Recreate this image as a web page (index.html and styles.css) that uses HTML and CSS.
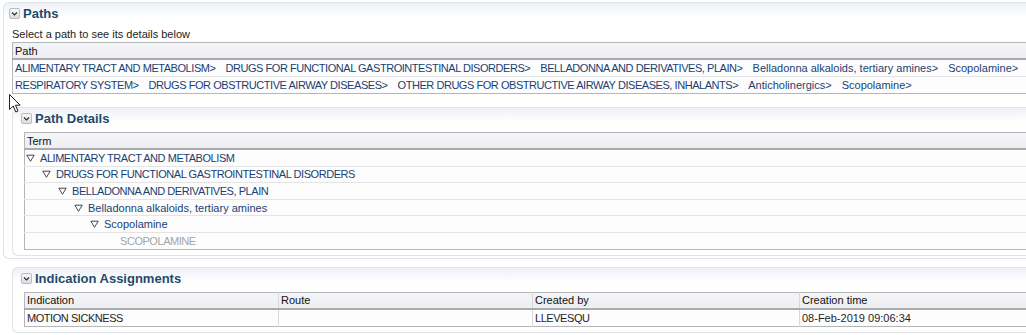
FILE: index.html
```
<!DOCTYPE html>
<html lang="en">
<head>
    <meta charset="UTF-8">
    <title>Paths</title>
<link rel="stylesheet" href="styles.css">
</head>
<body>
    <div class="page">
        <div class="panel panel-outer">
            <div class="panel-head">
                <span class="toggle"><svg width="11" height="11" viewBox="0 0 11 11"><defs><linearGradient id="tg" x1="0" y1="0" x2="0" y2="1"><stop offset="0" stop-color="#fbfbfb"/><stop offset="1" stop-color="#d9dbde"/></linearGradient></defs><rect x="0.5" y="0.5" width="10" height="10" rx="1.5" fill="url(#tg)" stroke="#b9bcc0"/><path d="M3 4.5 L5.5 7 L8 4.5" fill="none" stroke="#2c2c2c" stroke-width="1.1"/></svg></span>
                <span class="panel-title">Paths</span>
            </div>
            <div class="hint">Select a path to see its details below</div>
            <table class="grid grid-paths">
                <thead>
                    <tr><th>Path</th></tr>
                </thead>
                <tbody>
                    <tr><td>
                        <span class="crumb caps">ALIMENTARY TRACT AND METABOLISM&gt;</span><span class="crumb caps">DRUGS FOR FUNCTIONAL GASTROINTESTINAL DISORDERS&gt;</span><span class="crumb caps">BELLADONNA AND DERIVATIVES, PLAIN&gt;</span><span class="crumb">Belladonna alkaloids, tertiary amines&gt;</span><span class="crumb">Scopolamine&gt;</span>
                    </td></tr>
                    <tr><td>
                        <span class="crumb caps">RESPIRATORY SYSTEM&gt;</span><span class="crumb caps">DRUGS FOR OBSTRUCTIVE AIRWAY DISEASES&gt;</span><span class="crumb caps">OTHER DRUGS FOR OBSTRUCTIVE AIRWAY DISEASES, INHALANTS&gt;</span><span class="crumb">Anticholinergics&gt;</span><span class="crumb">Scopolamine&gt;</span>
                    </td></tr>
                </tbody>
            </table>

            <div class="panel panel-inner">
                <div class="panel-head">
                    <span class="toggle"><svg width="11" height="11" viewBox="0 0 11 11"><rect x="0.5" y="0.5" width="10" height="10" rx="1.5" fill="url(#tg)" stroke="#b9bcc0"/><path d="M3 4.5 L5.5 7 L8 4.5" fill="none" stroke="#2c2c2c" stroke-width="1.1"/></svg></span>
                    <span class="panel-title">Path Details</span>
                </div>
                <table class="grid grid-tree">
                    <thead>
                        <tr><th>Term</th></tr>
                    </thead>
                    <tbody>
                        <tr><td><span class="node caps level-0"><svg class="twisty" width="9" height="8" viewBox="0 0 9 8"><path d="M0.8 1.2 H8.2 L4.5 7.3 Z" fill="none" stroke="#333" stroke-width="0.9"/></svg>ALIMENTARY TRACT AND METABOLISM</span></td></tr>
                        <tr><td><span class="node caps level-1"><svg class="twisty" width="9" height="8" viewBox="0 0 9 8"><path d="M0.8 1.2 H8.2 L4.5 7.3 Z" fill="none" stroke="#333" stroke-width="0.9"/></svg>DRUGS FOR FUNCTIONAL GASTROINTESTINAL DISORDERS</span></td></tr>
                        <tr><td><span class="node caps level-2"><svg class="twisty" width="9" height="8" viewBox="0 0 9 8"><path d="M0.8 1.2 H8.2 L4.5 7.3 Z" fill="none" stroke="#333" stroke-width="0.9"/></svg>BELLADONNA AND DERIVATIVES, PLAIN</span></td></tr>
                        <tr><td><span class="node level-3"><svg class="twisty" width="9" height="8" viewBox="0 0 9 8"><path d="M0.8 1.2 H8.2 L4.5 7.3 Z" fill="none" stroke="#333" stroke-width="0.9"/></svg>Belladonna alkaloids, tertiary amines</span></td></tr>
                        <tr><td><span class="node level-4"><svg class="twisty" width="9" height="8" viewBox="0 0 9 8"><path d="M0.8 1.2 H8.2 L4.5 7.3 Z" fill="none" stroke="#333" stroke-width="0.9"/></svg>Scopolamine</span></td></tr>
                        <tr><td><span class="node caps level-5 leaf">SCOPOLAMINE</span></td></tr>
                    </tbody>
                </table>
            </div>
        </div>

        <div class="panel panel-inner panel-solo">
            <div class="panel-head">
                <span class="toggle"><svg width="11" height="11" viewBox="0 0 11 11"><rect x="0.5" y="0.5" width="10" height="10" rx="1.5" fill="url(#tg)" stroke="#b9bcc0"/><path d="M3 4.5 L5.5 7 L8 4.5" fill="none" stroke="#2c2c2c" stroke-width="1.1"/></svg></span>
                <span class="panel-title">Indication Assignments</span>
            </div>
            <table class="grid grid-cols">
                <thead>
                    <tr><th class="col-ind">Indication</th><th class="col-route">Route</th><th class="col-by">Created by</th><th>Creation time</th></tr>
                </thead>
                <tbody>
                    <tr><td class="caps">MOTION SICKNESS</td><td></td><td class="caps">LLEVESQU</td><td>08-Feb-2019 09:06:34</td></tr>
                </tbody>
            </table>
        </div>
    </div>

    <!-- mouse pointer caught in the screenshot -->
    <svg class="pointer" width="12" height="19" viewBox="0 0 12 19"><path d="M0.5 0.5 V15.5 L4.2 12 L6.8 18 L9 17 L6.5 11.2 H11.2 Z" fill="#fff" stroke="#222" stroke-width="1" stroke-linejoin="round"/></svg>
</body>
</html>
```

FILE: styles.css
```
:root {
    --title-color: #1f4a6b;
    --link-color: #1b3f72;
    --grid-line: #e3e4e6;
    --grid-edge: #b5b6b8;
    --panel-line: #dfe2e6;
}

body {
    margin: 0;
    overflow: hidden;
    background: #fff;
    font-family: "Liberation Sans", Arial, sans-serif;
    font-size: 11px;
    color: #1e1e1e;
}

.page {
    width: 1080px;
}

.caps {
    letter-spacing: -0.45px;
}

.panel {
    border: 1px solid var(--panel-line);
    border-right: none;
    border-radius: 6px 0 0 6px;
    background: linear-gradient(#edf1f6, #fff 14px);
}

.panel-outer {
    margin: 2px 0 0 3px;
    padding: 0 0 2px 8px;
}

.panel-inner {
    margin-top: 13px;
    padding: 0 0 5px 11px;
}

.panel-solo {
    margin-left: 12px;
    margin-top: 8px;
}

.panel-head {
    height: 21px;
    padding-bottom: 3px;
    display: flex;
    align-items: center;
    gap: 3px;
    margin-left: -3px;
}

.toggle {
    display: flex;
}

.panel-title {
    font-size: 13px;
    font-weight: bold;
    color: var(--title-color);
}

.hint {
    height: 14px;
    line-height: 14px;
    margin-bottom: 1px;
    color: #222;
}

.grid {
    width: 100%;
    border-collapse: collapse;
    border-top: 1px solid var(--grid-edge);
    border-bottom: 1px solid var(--grid-edge);
    border-left: 1px solid var(--grid-edge);
}

.grid th {
    height: 15px;
    padding: 0 0 0 2px;
    text-align: left;
    font-weight: normal;
    color: #111;
    background: linear-gradient(#f4f5f7, #eceef1);
    border-bottom: 2px solid #a9aaad;
}

.grid td {
    height: 16px;
    padding: 0 0 0 2px;
    border-top: 1px solid var(--grid-line);
    white-space: nowrap;
    background: #fdfdfd;
}

.grid tbody tr:first-child td {
    border-top: none;
}

.grid-tree td {
    height: 15.6px;
    padding-left: 1px;
}

.grid-cols th + th,
.grid-cols td + td {
    border-left: 1px solid #d8d9db;
}

.col-ind,
.col-route {
    width: 251px;
}

.col-by {
    width: 264px;
}

.crumb {
    color: var(--link-color);
    margin-right: 10px;
}

.node {
    display: inline-flex;
    align-items: center;
    gap: 5px;
    color: var(--link-color);
}

.twisty {
    flex: none;
}

.level-1 { margin-left: 16px; }
.level-2 { margin-left: 32px; }
.level-3 { margin-left: 48px; }
.level-4 { margin-left: 64px; }
.level-5 { margin-left: 94px; }

.leaf {
    color: #a3a5a8;
}

.pointer {
    position: absolute;
    left: 9px;
    top: 94px;
}
```
